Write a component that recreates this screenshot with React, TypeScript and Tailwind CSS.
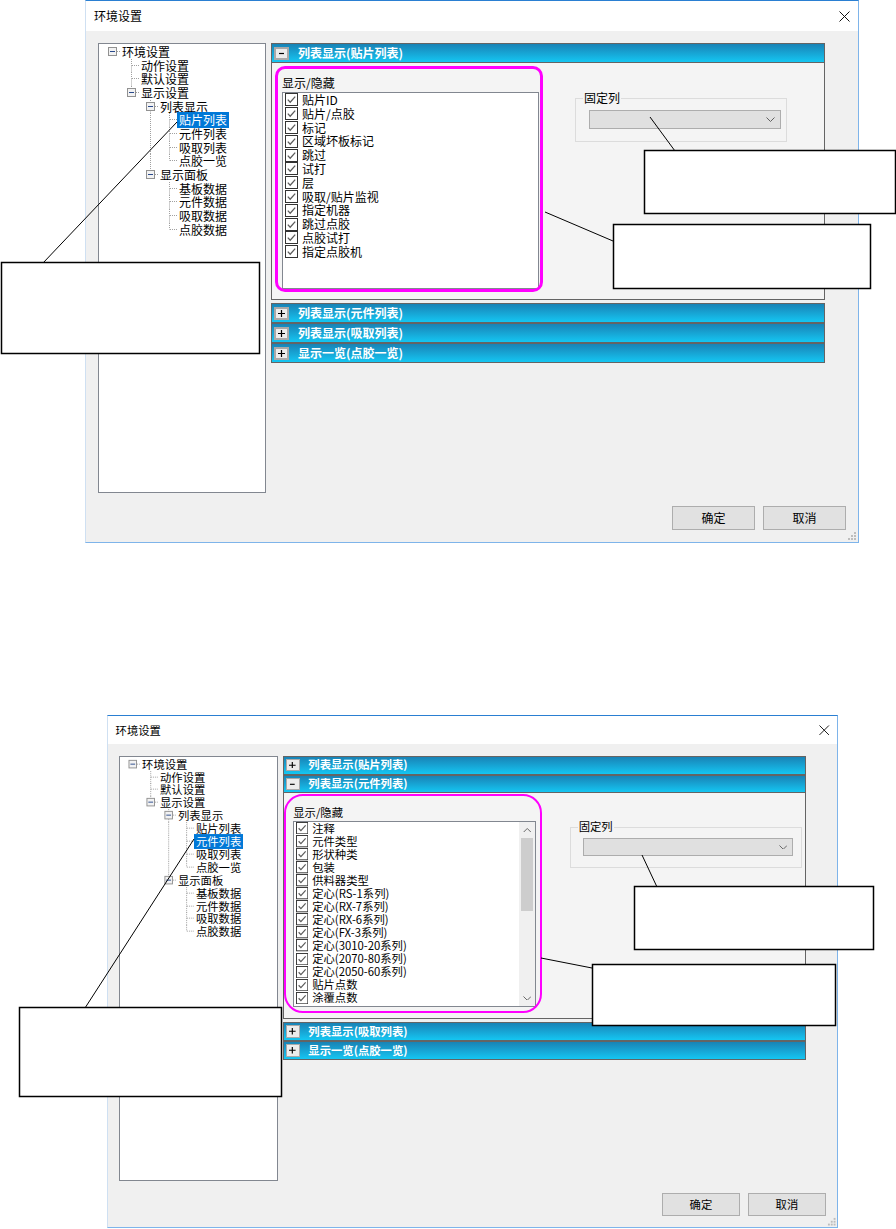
import React from 'react';

type TreeRow = { t: string; d: number; exp?: boolean };

const TREE: TreeRow[] = [
  { t: '环境设置', d: 0, exp: true },
  { t: '动作设置', d: 1 },
  { t: '默认设置', d: 1 },
  { t: '显示设置', d: 1, exp: true },
  { t: '列表显示', d: 2, exp: true },
  { t: '贴片列表', d: 3 },
  { t: '元件列表', d: 3 },
  { t: '吸取列表', d: 3 },
  { t: '点胶一览', d: 3 },
  { t: '显示面板', d: 2, exp: true },
  { t: '基板数据', d: 3 },
  { t: '元件数据', d: 3 },
  { t: '吸取数据', d: 3 },
  { t: '点胶数据', d: 3 },
];

function hasLater(i: number, a: number) {
  for (let j = i + 1; j < TREE.length; j++) {
    if (TREE[j].d < a) return false;
    if (TREE[j].d === a) return true;
  }
  return false;
}

const ROW_H = 13.67;

function TreeLines({ i }: { i: number }) {
  const { d, exp } = TREE[i];
  const cx = (a: number) => 13 + 19 * a;
  const w = cx(d) + 8;
  const mid = 6.5;
  const dot = { stroke: '#a0a0a0', strokeDasharray: '1 1', strokeWidth: 1 } as const;
  const lines: React.ReactNode[] = [];
  for (let a = 1; a < d; a++) {
    if (hasLater(i, a)) {
      lines.push(<line key={'v' + a} x1={cx(a) + 0.5} x2={cx(a) + 0.5} y1={0} y2={ROW_H} {...dot} />);
    }
  }
  if (d >= 1) {
    lines.push(<line key="vt" x1={cx(d) + 0.5} x2={cx(d) + 0.5} y1={0} y2={mid} {...dot} />);
    if (hasLater(i, d)) {
      lines.push(<line key="vb" x1={cx(d) + 0.5} x2={cx(d) + 0.5} y1={mid} y2={ROW_H} {...dot} />);
    }
  }
  lines.push(<line key="h" x1={cx(d) + 1} x2={cx(d) + 8} y1={mid} y2={mid} {...dot} />);
  return (
    <svg width={w} height={ROW_H} className="shrink-0 overflow-visible">
      {lines}
      {exp && (
        <g>
          <rect x={cx(d) - 3.5} y={2.5} width={8} height={8} fill="#f2f2f2" stroke="#919191" />
          <line x1={cx(d) - 2} x2={cx(d) + 3} y1={6.5} y2={6.5} stroke="#2a4a8c" strokeWidth={1} />
        </g>
      )}
    </svg>
  );
}

function Tree({ selected }: { selected: string }) {
  return (
    <div className="w-[168px] h-[450px] shrink-0 border border-[#828790] bg-white pt-[1px] overflow-hidden">
      {TREE.map((r, i) => (
        <div key={i} className="flex items-center h-[13.67px]">
          <TreeLines i={i} />
          <span
            className={`px-[2px] h-[13.67px] leading-[13.67px] text-[12px] whitespace-nowrap ${
              r.t === selected
                ? 'bg-[#0078d7] text-white shadow-[0_1px_0_#0078d7,0_-1px_0_#0078d7]'
                : 'text-black'
            }`}
          >
            {r.t}
          </span>
        </div>
      ))}
    </div>
  );
}

function Header({ title, open }: { title: string; open: boolean }) {
  return (
    <div className="h-[20px] border border-[#646464] bg-linear-to-b from-[#1883b6] to-[#14c6f2] flex items-center">
      <div className="ml-[2px] w-[15px] h-[13px] border-2 border-[#a9a9a9] bg-[#ececec] flex items-center justify-center">
        <svg width="7" height="7">
          <path d={open ? 'M1 3.5H6' : 'M0 3.5H7M3.5 0V7'} stroke="#000" strokeWidth="1.2" />
        </svg>
      </div>
      <span className="ml-[9px] text-white font-bold text-[12px] leading-none whitespace-nowrap">{title}</span>
    </div>
  );
}

function CheckBox() {
  return (
    <svg width="13" height="13" className="shrink-0">
      <rect x="0.5" y="0.5" width="12" height="12" fill="#fff" stroke="#333" />
      <path d="M2.8 6.6L5.2 9.2L10.2 3.6" stroke="#5c5c5c" strokeWidth="1.3" fill="none" />
    </svg>
  );
}

function Chevron({ up }: { up?: boolean }) {
  return (
    <svg width="9" height="5">
      <path d={up ? 'M0.5 4.5L4.5 0.5L8.5 4.5' : 'M0.5 0.5L4.5 4.5L8.5 0.5'} stroke="#606060" fill="none" />
    </svg>
  );
}

function ListBox({ items, scroll }: { items: string[]; scroll?: boolean }) {
  return (
    <div className="w-[257px] h-[197px] border border-[#828790] bg-white flex overflow-hidden">
      <div className="flex-1 overflow-hidden">
        {items.map((t, i) => (
          <div key={i} className="flex items-center h-[13.8px] pl-[2px]">
            <CheckBox />
            <span className="ml-[4px] text-[12px] leading-[13.8px] whitespace-nowrap text-black">{t}</span>
          </div>
        ))}
      </div>
      {scroll && (
        <div className="w-[17px] h-full bg-[#f0f0f0] flex flex-col">
          <div className="h-[17px] flex items-center justify-center">
            <Chevron up />
          </div>
          <div className="mx-[2px] h-[77px] bg-[#cdcdcd]" />
          <div className="mt-auto h-[17px] flex items-center justify-center">
            <Chevron />
          </div>
        </div>
      )}
    </div>
  );
}

function Content({
  items,
  scroll,
  groupW,
  comboW,
  h,
  mag,
}: {
  items: string[];
  scroll?: boolean;
  groupW: number;
  comboW: number;
  h: number;
  mag: { l: number; t: number; w: number; h: number; r: number };
}) {
  return (
    <div
      className="relative border-x border-b border-[#646464] bg-[#f4f4f4] flex"
      style={{ height: h }}
    >
      <div className="ml-[10px] pt-[12px] flex flex-col">
        <div className="h-[15px] leading-[15px] text-[12px] text-black whitespace-nowrap">显示/隐藏</div>
        <div className="mt-[2px]">
          <ListBox items={items} scroll={scroll} />
        </div>
      </div>
      <div className="ml-[36px] mt-[35px]">
        <div className="relative h-[44px] border border-[#dcdcdc]" style={{ width: groupW }}>
          <span className="absolute left-[7px] -top-[8px] px-[1px] bg-[#f4f4f4] text-[12px] leading-[14px] text-black">
            固定列
          </span>
          <div
            className="ml-[13px] mt-[11px] h-[19px] border border-[#adadad] bg-[#e0e0e0] flex items-center justify-end pr-[5px]"
            style={{ width: comboW }}
          >
            <Chevron />
          </div>
        </div>
      </div>
      <div
        className="absolute border-[3px] border-[#ff00ff] pointer-events-none"
        style={{ left: mag.l, top: mag.t, width: mag.w, height: mag.h, borderRadius: mag.r }}
      />
    </div>
  );
}

const ITEMS1 = [
  '贴片ID',
  '贴片/点胶',
  '标记',
  '区域坏板标记',
  '跳过',
  '试打',
  '层',
  '吸取/贴片监视',
  '指定机器',
  '跳过点胶',
  '点胶试打',
  '指定点胶机',
];

const ITEMS2 = [
  '注释',
  '元件类型',
  '形状种类',
  '包装',
  '供料器类型',
  '定心(RS-1系列)',
  '定心(RX-7系列)',
  '定心(RX-6系列)',
  '定心(FX-3系列)',
  '定心(3010-20系列)',
  '定心(2070-80系列)',
  '定心(2050-60系列)',
  '贴片点数',
  '涂覆点数',
];

function Dialog({ variant }: { variant: 1 | 2 }) {
  return (
    <div className="w-[774px] h-[543px] border border-[#7eb4ea] border-t-[#2a7fd2] border-l-[#cfe0f2] bg-[#f0f0f0] flex flex-col">
      <div className="h-[30px] bg-white flex items-center justify-between pl-[8px] pr-[8px]">
        <span className="text-[12px] leading-none text-black">环境设置</span>
        <svg width="11" height="11">
          <path d="M0.5 0.5L10.5 10.5M10.5 0.5L0.5 10.5" stroke="#111" strokeWidth="1" />
        </svg>
      </div>
      <div className="relative flex-1 flex flex-col px-[12px] pt-[12px]">
        <div className="flex">
          <Tree selected={variant === 1 ? '贴片列表' : '元件列表'} />
          <div className="ml-[5px] w-[554px] flex flex-col">
            {variant === 1 ? (
              <>
                <Header title="列表显示(贴片列表)" open />
                <Content
                  items={ITEMS1}
                  groupW={212}
                  comboW={192}
                  h={237}
                  mag={{ l: 3, t: 3, w: 268, h: 226, r: 10 }}
                />
                <div className="mt-[3px]">
                  <Header title="列表显示(元件列表)" open={false} />
                </div>
              </>
            ) : (
              <>
                <Header title="列表显示(贴片列表)" open={false} />
                <Header title="列表显示(元件列表)" open />
                <Content
                  items={ITEMS2}
                  scroll
                  groupW={245}
                  comboW={222}
                  h={239}
                  mag={{ l: 0, t: 1, w: 273, h: 231, r: 20 }}
                />
                <div className="mt-[3px]" />
              </>
            )}
            <Header title="列表显示(吸取列表)" open={false} />
            <Header title="显示一览(点胶一览)" open={false} />
          </div>
        </div>
        <div className="mt-[13px] flex justify-end gap-[8px]">
          <div className="w-[83px] h-[24px] border border-[#adadad] bg-[#e1e1e1] flex items-center justify-center text-[12px] text-black">
            确定
          </div>
          <div className="w-[83px] h-[24px] border border-[#adadad] bg-[#e1e1e1] flex items-center justify-center text-[12px] text-black">
            取消
          </div>
        </div>
        <svg width="10" height="10" className="absolute right-[1px] bottom-[1px]">
          <rect x="7" y="1" width="2" height="2" fill="#bdbdbd" />
          <rect x="4" y="4" width="2" height="2" fill="#bdbdbd" />
          <rect x="7" y="4" width="2" height="2" fill="#bdbdbd" />
          <rect x="1" y="7" width="2" height="2" fill="#bdbdbd" />
          <rect x="4" y="7" width="2" height="2" fill="#bdbdbd" />
          <rect x="7" y="7" width="2" height="2" fill="#bdbdbd" />
        </svg>
      </div>
    </div>
  );
}

function Annotations() {
  const box = (x: number, y: number, w: number, h: number) => (
    <rect x={x + 0.5} y={y + 0.5} width={w} height={h} fill="#fff" stroke="#000" strokeWidth="1.5" />
  );
  return (
    <svg width="896" height="1229" className="absolute left-0 top-0 pointer-events-none">
      <g stroke="#000" strokeWidth="1" fill="none">
        <line x1="650" y1="117" x2="675" y2="151" />
        <line x1="545" y1="212" x2="613" y2="241" />
        <line x1="177" y1="122" x2="43" y2="263" />
        <line x1="642" y1="855" x2="657" y2="887" />
        <line x1="541" y1="958" x2="592" y2="968" />
        <line x1="194" y1="839" x2="85" y2="1008" />
      </g>
      {box(644, 150, 251, 63)}
      {box(613, 224, 257, 64)}
      {box(1, 262, 258, 91)}
      {box(634, 886, 239, 63)}
      {box(592, 964, 243, 61)}
      {box(19, 1007, 262, 89)}
    </svg>
  );
}

export default function App() {
  return (
    <div className="relative w-[896px] h-[1229px] bg-white overflow-hidden font-['Noto_Sans_CJK_SC',sans-serif]">
      <div className="pl-[85px]">
        <Dialog variant={1} />
      </div>
      <div className="pl-[107px] pt-[172px]">
        <div className="[zoom:0.945]">
          <Dialog variant={2} />
        </div>
      </div>
      <Annotations />
    </div>
  );
}
